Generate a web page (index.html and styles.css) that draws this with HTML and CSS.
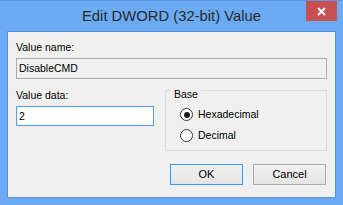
FILE: index.html
```html
<!DOCTYPE html>
<html lang="en">
<head>
    <meta charset="UTF-8">
    <title>Edit DWORD (32-bit) Value</title>
    <link rel="stylesheet" href="styles.css">
</head>
<body>

    <div class="window">
        <div class="title-bar">
            <span></span>
            <span class="title">Edit DWORD (32-bit) Value</span>
            <span class="close-btn">
                <svg width="9" height="9" viewBox="0 0 9 9"><path d="M1 1 L8 8 M8 1 L1 8" stroke="#fff" stroke-width="2" fill="none"/></svg>
            </span>
        </div>

        <div class="client">
            <div class="field-label">Value name:</div>
            <div class="textbox readonly">DisableCMD</div>

            <div class="data-row">
                <div class="data-col">
                    <div class="field-label">Value data:</div>
                    <div class="textbox focused">2</div>
                </div>

                <div class="group">
                    <div class="group-title">Base</div>
                    <div class="radios">
                        <div class="radio-row"><span class="radio checked"><span class="dot"></span></span>Hexadecimal</div>
                        <div class="radio-row"><span class="radio"></span>Decimal</div>
                    </div>
                </div>
            </div>

            <div class="buttons">
                <div class="btn default">OK</div>
                <div class="btn">Cancel</div>
            </div>
        </div>
    </div>

</body>
</html>
```

FILE: styles.css
```css
* {
    margin: 0;
    padding: 0;
    box-sizing: border-box;
}

body {
    font-family: "Liberation Sans", Arial, sans-serif;
    background: #6aabf4;
}

.window {
    width: 343px;
    height: 205px;
    background: #6aabf4;
    border-top: 1px solid #5b99e0;
}

.title-bar {
    height: 30px;
    display: grid;
    grid-template-columns: 1fr auto 1fr;
}

.title {
    font-size: 14.8px;
    line-height: 21px;
    padding-top: 5px;
    color: #2a2a2a;
}

.close-btn {
    justify-self: end;
    margin-right: 6px;
    width: 31px;
    height: 20px;
    background: #c75050;
    display: flex;
    align-items: center;
    justify-content: center;
}

.client {
    margin: 0 7px;
    height: 167px;
    background: #f0f0f0;
    border: 1px solid #5a93d4;
    padding: 9px 8px 0;
    font-size: 10.5px;
    color: #000;
}

.field-label {
    line-height: 13px;
}

.textbox {
    margin-top: 4px;
    height: 21px;
    border: 1px solid #adadad;
    padding-left: 2px;
    line-height: 19px;
}

.textbox.readonly {
    background: #f0f0f0;
}

.textbox.focused {
    height: 20px;
    line-height: 18px;
    background: #fff;
    border-color: #569de5;
}

.data-row {
    margin-top: 10px;
    display: grid;
    grid-template-columns: 138px 1fr;
    gap: 11px;
    align-items: start;
}

.group {
    margin-top: 1px;
    border: 1px solid #dcdcdc;
    padding: 0 8px 4px;
    line-height: 13px;
}

.group-title {
    width: max-content;
    margin: -3px 0 0 -3px;
    padding: 0 3px;
    background: #f0f0f0;
}

.radios {
    margin-top: 3px;
    padding-left: 6px;
}

.radio-row {
    height: 21px;
    display: flex;
    align-items: center;
    gap: 5px;
}

.radio {
    width: 13px;
    height: 13px;
    border: 1px solid #333;
    border-radius: 50%;
    background: #fff;
    display: flex;
    align-items: center;
    justify-content: center;
}

.dot {
    width: 6px;
    height: 6px;
    border-radius: 50%;
    background: #1a1a1a;
}

.buttons {
    margin-top: 13px;
    display: flex;
    justify-content: flex-end;
    gap: 10px;
    padding-right: 1px;
}

.btn {
    width: 73px;
    height: 21px;
    border: 1px solid #acacac;
    background: linear-gradient(#f0f0f0, #e5e5e5);
    text-align: center;
    line-height: 19px;
    font-size: 11px;
}

.btn.default {
    border-color: #3399ff;
}
```
